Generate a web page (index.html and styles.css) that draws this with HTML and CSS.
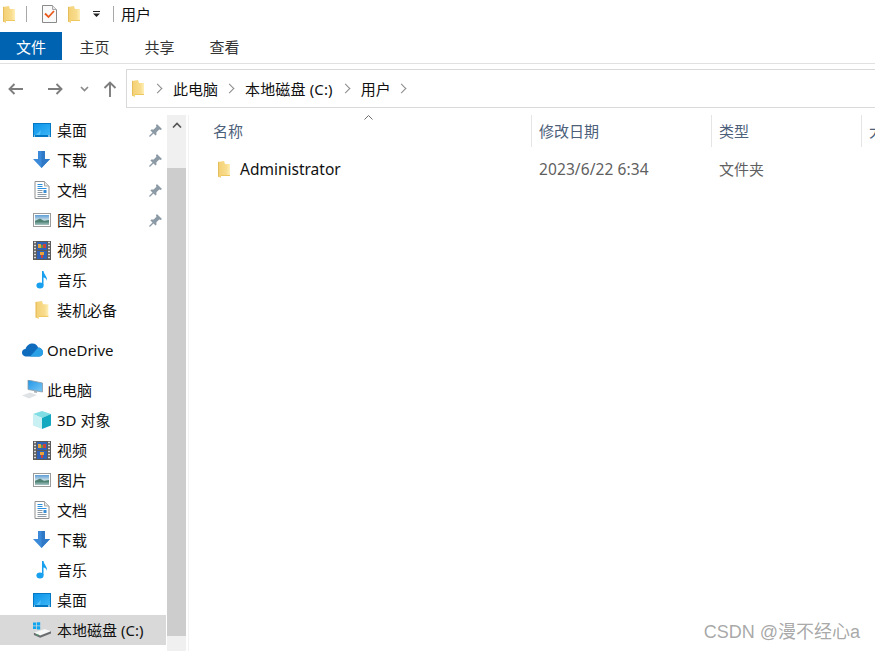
FILE: index.html
```html
<!DOCTYPE html>
<html lang="zh">
<head>
    <meta charset="UTF-8">
    <meta name="viewport" content="width=device-width, initial-scale=1.0">
    <title>用户</title>
    <link rel="stylesheet" href="styles.css">
</head>
<body>
    <!-- 图标 -->
    <svg class="defs" width="0" height="0" aria-hidden="true">
        <defs>
            <linearGradient id="folderFill" x1="0" y1="0" x2="1" y2="0">
                <stop offset="0" stop-color="#f3cf72"/>
                <stop offset="0.7" stop-color="#f8dc8e"/>
                <stop offset="1" stop-color="#fff0b8"/>
            </linearGradient>
            <linearGradient id="screenFill" x1="0" y1="0" x2="1" y2="1">
                <stop offset="0" stop-color="#0a94ea"/>
                <stop offset="1" stop-color="#3db5f5"/>
            </linearGradient>
            <linearGradient id="photoFill" x1="0" y1="0" x2="0" y2="1">
                <stop offset="0" stop-color="#5d9dd6"/>
                <stop offset="0.5" stop-color="#c8dde6"/>
                <stop offset="0.7" stop-color="#5c8f83"/>
                <stop offset="1" stop-color="#a9c3c4"/>
            </linearGradient>
            <linearGradient id="pcFill" x1="0" y1="0" x2="1" y2="1">
                <stop offset="0" stop-color="#1e95e8"/>
                <stop offset="1" stop-color="#7cc8f4"/>
            </linearGradient>
            <symbol id="i-folder" viewBox="0 0 12 17">
                <path d="M0 1 L6 0 L7 3 H12 V15 H3 V17 L0 15.5 Z" fill="url(#folderFill)"/>
                <path d="M0 1 L1 .8 V15.9 L0 15.5 Z" fill="#e6bd5c"/>
                <path d="M3 15 H12 V14 H3 Z" fill="#f0c860"/>
            </symbol>
            <symbol id="i-check" viewBox="0 0 15 18">
                <path d="M.5 .5 H10.5 L14.5 4.5 V17.5 H.5 Z" fill="#fafafa" stroke="#8a8a8a"/>
                <path d="M10.5 .5 V4.5 H14.5" fill="#e8e8e8" stroke="#a8a8a8"/>
                <path d="M3 8.5 L6.5 12 L12 6" fill="none" stroke="#ea5a1e" stroke-width="1.8"/>
            </symbol>
            <symbol id="i-desktop" viewBox="0 0 18 14">
                <rect x="0" y="0" width="18" height="14" fill="#0578c4"/>
                <rect x="1" y="1" width="16" height="11" fill="url(#screenFill)"/>
                <path d="M3 12 L8 7 L7 12 Z" fill="#53c0f7"/>
                <rect x="15" y="12.5" width="2" height="1" fill="#fff"/>
                <rect x="1" y="12.5" width="1" height="1" fill="#fff"/>
            </symbol>
            <symbol id="i-down" viewBox="0 0 18 18">
                <path d="M5 0 H12 V8 H17 L8.5 17 L0 8 H5 Z" fill="#3b8ad9"/>
                <path d="M8.5 0 H12 V8 H17 L8.5 17 Z" fill="#2f79c6"/>
            </symbol>
            <symbol id="i-doc" viewBox="0 0 15 18">
                <path d="M.5 .5 H10 L14.5 5 V17.5 H.5 Z" fill="#fff" stroke="#8f8f8f"/>
                <path d="M10 .5 V5 H14.5" fill="#e4e4e4" stroke="#a8a8a8"/>
                <path d="M3 3.5 H8 M3 5.5 H8 M3 7.5 H12" stroke="#2b8fe0"/>
                <path d="M3 9.5 H8 M3 11.5 H8 M3 13.5 H12 M3 15.5 H12" stroke="#8d9aa6"/>
                <rect x="9" y="9" width="3" height="3" fill="#3c8fd6"/>
            </symbol>
            <symbol id="i-photo" viewBox="0 0 18 14">
                <rect x=".5" y=".5" width="17" height="13" fill="#fff" stroke="#9c9c9c"/>
                <rect x="2" y="2" width="14" height="10" fill="url(#photoFill)"/>
                <path d="M2 8 L7 5.5 L11 8 L16 7 V9 H2 Z" fill="#4f8273"/>
            </symbol>
            <symbol id="i-video" viewBox="0 0 18 19">
                <rect x="0" y="0" width="18" height="19" fill="#5a5a5a"/>
                <path d="M1 1.5 H3 M1 4.5 H3 M1 7.5 H3 M1 10.5 H3 M1 13.5 H3 M1 16.5 H3 M15 1.5 H17 M15 4.5 H17 M15 7.5 H17 M15 10.5 H17 M15 13.5 H17 M15 16.5 H17" stroke="#d8d8d8" stroke-width="1.4"/>
                <rect x="4" y="1" width="10" height="8" fill="#2f63b8"/>
                <rect x="4" y="10" width="10" height="8" fill="#2f63b8"/>
                <rect x="5" y="3" width="3" height="4" fill="#e8a23a"/>
                <rect x="8" y="4" width="2" height="3" fill="#5a9a4a"/>
                <rect x="10" y="3" width="3" height="4" fill="#c9433a"/>
                <rect x="7" y="11" width="4" height="3" fill="#e8a23a"/>
                <rect x="8" y="14" width="2" height="3" fill="#c9433a"/>
            </symbol>
            <symbol id="i-music" viewBox="0 0 12 18">
                <ellipse cx="4" cy="14.5" rx="3.6" ry="3" fill="#18a0ef"/>
                <path d="M6 14 V0 H7.5 C8 4 11.5 5 11 10 C10.5 8 9 6.5 7.5 6.5 V14 Z" fill="#18a0ef"/>
            </symbol>
            <symbol id="i-pin" viewBox="0 0 14 14">
                <path d="M8.5 0 L14 5.5 L12.5 6.5 L11 6 L8 9 L8 11.5 L7 12.5 L4.8 10.2 L1 14 L0 13 L3.8 9.2 L1.5 7 L2.5 6 L5 6 L8 3 L7.5 1.5 Z" fill="#8c9aa6"/>
            </symbol>
            <symbol id="i-cloud" viewBox="0 0 21 14">
                <path d="M5 13.5 C1.5 13.5 0 11.5 0 9.5 C0 7.5 1.5 6 3.5 6 C4.5 2.5 7.5 .5 10.5 .5 C13.5 .5 15.5 2.5 16 4.5 C19 4.5 21 7 21 9.5 C21 12 19 13.5 17 13.5 Z" fill="#0f6cbd"/>
                <path d="M8 13.5 L14 7 C15 5.5 17 4.5 18 5 C20 6 21 8 21 9.5 C21 12 19 13.5 17 13.5 Z" fill="#2aa0e6"/>
            </symbol>
            <symbol id="i-pc" viewBox="0 0 21 20">
                <path d="M6 0 L20.5 3 V12 L6 9.5 Z" fill="url(#pcFill)" stroke="#8b9aa6" stroke-width=".8"/>
                <path d="M12 10.5 L15 11 V13 L12 12.5 Z" fill="#a9b2ba"/>
                <path d="M0 15.5 L8 12.5 L15 15 L7 18.5 Z" fill="#dfe3e6"/>
            </symbol>
            <symbol id="i-cube" viewBox="0 0 18 18">
                <path d="M9 0 L18 3 L9 7 L0 3 Z" fill="#7fdde3"/>
                <path d="M0 3 L9 7 V18 L0 14.5 Z" fill="#c9f0f2"/>
                <path d="M18 3 L9 7 V18 L18 14.5 Z" fill="#12a8bf"/>
            </symbol>
            <symbol id="i-disk" viewBox="0 0 20 18">
                <path d="M0 .8 H3.6 V4 H0 Z M4.4 .3 H8 V4 H4.4 Z M0 4.8 H3.6 V8 H0 Z M4.4 4.8 H8 V8.5 H4.4 Z" fill="#0fa5f0"/>
                <path d="M1 12 L13 8 L20 10.5 L8 15 Z" fill="#f6f7f7"/>
                <path d="M1 12 L8 15 L20 10.5 V13 L8 17.5 L1 14.5 Z" fill="#6a6e71"/>
                <rect x="4" y="14" width="2" height="1" fill="#3fbf6a"/>
            </symbol>
        </defs>
    </svg>

    <div class="window">
        <div class="titlebar">
            <svg class="ico-folder-top"><use href="#i-folder"/></svg>
            <span class="bar-sep sep-a"></span>
            <svg class="ico-check"><use href="#i-check"/></svg>
            <svg class="ico-folder-top folder-b"><use href="#i-folder"/></svg>
            <svg class="ico-drop" viewBox="0 0 7 6"><path d="M0 0 H7 V1 H0 Z M0 2.5 H7 L3.5 6 Z" fill="#222"/></svg>
            <span class="bar-sep sep-b"></span>
            <span class="title-text">用户</span>
        </div>

        <div class="tabs">
            <div class="tab tab-file">文件</div>
            <div class="tab">主页</div>
            <div class="tab">共享</div>
            <div class="tab">查看</div>
        </div>

        <div class="navrow">
            <div class="nav-btns">
                <svg class="nav-arrow" viewBox="0 0 16 12"><path d="M15 6 H2 M6.5 1 L1.5 6 L6.5 11" fill="none" stroke="#7d7d7d" stroke-width="1.9"/></svg>
                <svg class="nav-arrow nav-forward" viewBox="0 0 16 12"><path d="M1 6 H14 M9.5 1 L14.5 6 L9.5 11" fill="none" stroke="#7d7d7d" stroke-width="1.9"/></svg>
                <svg class="nav-chev" viewBox="0 0 9 6"><path d="M1 1 L4.5 4.5 L8 1" fill="none" stroke="#8a8a8a" stroke-width="1.7"/></svg>
                <svg class="nav-up" viewBox="0 0 14 16"><path d="M7 16 V2 M1.5 7 L7 1.5 L12.5 7" fill="none" stroke="#7d7d7d" stroke-width="1.9"/></svg>
            </div>
            <div class="address">
                <svg class="addr-folder"><use href="#i-folder"/></svg>
                <span class="crumb-sep crumb-first"></span>
                <span class="crumb">此电脑</span>
                <span class="crumb-sep crumb-second"></span>
                <span class="crumb crumb-disk">本地磁盘 (C:)</span>
                <span class="crumb-sep crumb-third"></span>
                <span class="crumb">用户</span>
                <span class="crumb-sep"></span>
            </div>
        </div>

        <div class="main">
            <div class="sidebar">
                <div class="tree">
                    <div class="item"><svg class="ico ico-wide"><use href="#i-desktop"/></svg><span class="name">桌面</span><svg class="pin"><use href="#i-pin"/></svg></div>
                    <div class="item"><svg class="ico"><use href="#i-down"/></svg><span class="name">下载</span><svg class="pin"><use href="#i-pin"/></svg></div>
                    <div class="item"><svg class="ico"><use href="#i-doc"/></svg><span class="name">文档</span><svg class="pin"><use href="#i-pin"/></svg></div>
                    <div class="item"><svg class="ico ico-wide"><use href="#i-photo"/></svg><span class="name">图片</span><svg class="pin"><use href="#i-pin"/></svg></div>
                    <div class="item"><svg class="ico ico-tall"><use href="#i-video"/></svg><span class="name">视频</span></div>
                    <div class="item"><svg class="ico"><use href="#i-music"/></svg><span class="name">音乐</span></div>
                    <div class="item"><svg class="ico"><use href="#i-folder"/></svg><span class="name">装机必备</span></div>

                    <div class="item item-root group-gap"><svg class="ico-root"><use href="#i-cloud"/></svg><span class="name">OneDrive</span></div>
                    <div class="item item-root group-gap"><svg class="ico-root"><use href="#i-pc"/></svg><span class="name">此电脑</span></div>

                    <div class="item"><svg class="ico"><use href="#i-cube"/></svg><span class="name">3D 对象</span></div>
                    <div class="item"><svg class="ico ico-tall"><use href="#i-video"/></svg><span class="name">视频</span></div>
                    <div class="item"><svg class="ico ico-wide"><use href="#i-photo"/></svg><span class="name">图片</span></div>
                    <div class="item"><svg class="ico"><use href="#i-doc"/></svg><span class="name">文档</span></div>
                    <div class="item"><svg class="ico"><use href="#i-down"/></svg><span class="name">下载</span></div>
                    <div class="item"><svg class="ico"><use href="#i-music"/></svg><span class="name">音乐</span></div>
                    <div class="item"><svg class="ico ico-wide"><use href="#i-desktop"/></svg><span class="name">桌面</span></div>
                    <div class="item selected"><svg class="ico"><use href="#i-disk"/></svg><span class="name">本地磁盘 (C:)</span></div>
                </div>
                <div class="scrollbar">
                    <div class="scroll-btn">
                        <svg class="scroll-up" viewBox="0 0 10 6"><path d="M1 5.5 L5 1.5 L9 5.5" fill="none" stroke="#555" stroke-width="1.6"/></svg>
                    </div>
                    <div class="scroll-thumb"></div>
                    <div class="scroll-end"></div>
                </div>
            </div>

            <div class="files">
                <div class="head">
                    <div class="col col-name">
                        名称
                        <svg class="sort" viewBox="0 0 9 5"><path d="M.5 4.5 L4.5 .5 L8.5 4.5" fill="none" stroke="#6d6d6d"/></svg>
                    </div>
                    <div class="col col-date">修改日期</div>
                    <div class="col col-type">类型</div>
                    <div class="col col-size">大小</div>
                </div>
                <div class="row">
                    <div class="cell col-name cell-name"><svg class="row-folder"><use href="#i-folder"/></svg>Administrator</div>
                    <div class="cell col-date cell-date">2023/6/22 6:34</div>
                    <div class="cell col-type">文件夹</div>
                </div>
            </div>
        </div>

        <div class="watermark">CSDN @漫不经心a</div>
    </div>
</body>
</html>
```

FILE: styles.css
```css
* {
    box-sizing: border-box;
}

html, body {
    margin: 0;
    padding: 0;
    height: 100%;
    overflow: hidden;
    background: #fff;
}

body {
    font-family: "Noto Sans", "Noto Sans CJK SC", sans-serif;
    font-size: 15px;
    color: #111;
}

.defs {
    position: absolute;
}

.window {
    position: relative;
    display: flex;
    flex-direction: column;
    width: 875px;
    height: 651px;
    overflow: hidden;
}

/* 标题栏 */
.titlebar {
    display: flex;
    align-items: center;
    height: 32px;
    padding: 0 0 4px 3px;
    flex: none;
}

.ico-folder-top {
    width: 12px;
    height: 17px;
    flex: none;
}

.folder-b {
    margin-left: 11px;
}

.ico-check {
    width: 15px;
    height: 18px;
    margin-left: 15px;
    flex: none;
}

.ico-drop {
    width: 7px;
    height: 6px;
    margin-left: 13px;
    flex: none;
}

.bar-sep {
    width: 1px;
    height: 16px;
    background: #a8a8a8;
    flex: none;
}

.sep-a {
    margin-left: 11px;
}

.sep-b {
    margin-left: 13px;
}

.title-text {
    margin: 0 0 1px 7px;
    line-height: 20px;
}

/* 选项卡 */
.tabs {
    display: flex;
    height: 32px;
    padding-bottom: 3px;
    border-bottom: 1px solid #e1e1e1;
    flex: none;
}

.tab {
    display: flex;
    align-items: center;
    justify-content: center;
    width: 65px;
    height: 28px;
    color: #333;
}

.tab-file {
    width: 62px;
    background: #0063b1;
    color: #fff;
}

/* 地址栏 */
.navrow {
    display: flex;
    height: 44px;
    padding-top: 5px;
    flex: none;
}

.nav-btns {
    display: flex;
    align-items: center;
    width: 126px;
    height: 39px;
    padding-left: 8px;
    flex: none;
}

.nav-arrow {
    width: 16px;
    height: 12px;
    flex: none;
}

.nav-forward {
    margin-left: 23px;
}

.nav-chev {
    width: 9px;
    height: 6px;
    margin-left: 17px;
    flex: none;
}

.nav-up {
    width: 14px;
    height: 16px;
    margin-left: 14px;
    flex: none;
}

.address {
    display: flex;
    align-items: center;
    flex: 1;
    height: 39px;
    padding-left: 5px;
    border: 1px solid #d9d9d9;
    border-right: none;
}

.addr-folder {
    width: 12px;
    height: 17px;
    flex: none;
}

.crumb {
    line-height: 20px;
}

.crumb-disk {
    letter-spacing: 0.15px;
}

.crumb-sep {
    width: 7px;
    height: 7px;
    margin: 0 12px 0 7px;
    border-top: 1.5px solid #8a8a8a;
    border-right: 1.5px solid #8a8a8a;
    transform: rotate(45deg);
    flex: none;
}

.crumb-first {
    margin-left: 10px;
}

.crumb-second {
    margin-left: 8px;
}

.crumb-third {
    margin-left: 9px;
}

/* 主体 */
.main {
    display: flex;
    flex: 1;
    min-height: 0;
    padding-top: 7px;
}

.sidebar {
    display: flex;
    width: 189px;
    margin-bottom: -8px;
    border-right: 1px solid #f2f2f2;
    flex: none;
}

.tree {
    width: 166px;
    flex: none;
}

.item {
    display: flex;
    align-items: center;
    height: 30px;
    padding-left: 33px;
}

.item-root {
    padding-left: 22px;
}

.group-gap {
    margin-top: 10px;
}

.selected {
    background: #d9d9d9;
}

.ico {
    width: 18px;
    height: 18px;
    flex: none;
}

.ico-wide {
    height: 14px;
}

.ico-tall {
    height: 19px;
}

.ico-root {
    width: 21px;
    height: 20px;
    flex: none;
}

.name {
    margin-left: 6px;
    line-height: 20px;
    white-space: nowrap;
}

.item-root .name {
    margin-left: 4px;
}

.pin {
    width: 13px;
    height: 13px;
    margin-left: auto;
    margin-right: 4px;
    flex: none;
}

.scrollbar {
    display: flex;
    flex-direction: column;
    width: 19px;
    margin-left: 1px;
    background: #f0f0f0;
    flex: none;
}

.scroll-btn {
    display: flex;
    justify-content: center;
    height: 53px;
    padding-top: 7px;
    flex: none;
}

.scroll-up {
    width: 10px;
    height: 6px;
}

.scroll-thumb {
    height: 468px;
    background: #cdcdcd;
    flex: none;
}

.scroll-end {
    flex: 1;
}

/* 文件列表 */
.files {
    flex: 1;
    min-width: 0;
}

.head {
    display: flex;
    height: 32px;
}

.col {
    position: relative;
    height: 32px;
    padding: 6px 0 0 7px;
    border-right: 1px solid #e5e5e5;
    color: #4c607a;
    line-height: 20px;
    white-space: nowrap;
    flex: none;
}

.col-name {
    width: 343px;
    padding-left: 24px;
}

.col-date {
    width: 180px;
}

.col-type {
    width: 150px;
}

.col-size {
    width: 40px;
    border-right: none;
}

.sort {
    position: absolute;
    left: 175px;
    top: 0;
    width: 9px;
    height: 5px;
}

.row {
    display: flex;
    align-items: center;
    height: 30px;
    margin-top: 7px;
}

.cell {
    padding-left: 7px;
    color: #5f5f5f;
    line-height: 20px;
    flex: none;
}

.cell-name {
    display: flex;
    align-items: center;
    padding-left: 29px;
    color: #111;
    font-size: 15.5px;
}

.cell-date {
    font-size: 15.5px;
    letter-spacing: 0.1px;
}

.row-folder {
    width: 12px;
    height: 17px;
    margin-right: 10px;
    flex: none;
}

/* 水印 */
.watermark {
    position: absolute;
    right: 15px;
    bottom: 8px;
    color: rgba(130, 130, 130, 0.7);
    font-family: "Liberation Sans", "Noto Sans CJK SC", sans-serif;
    font-size: 18px;
    line-height: 22px;
}
```
